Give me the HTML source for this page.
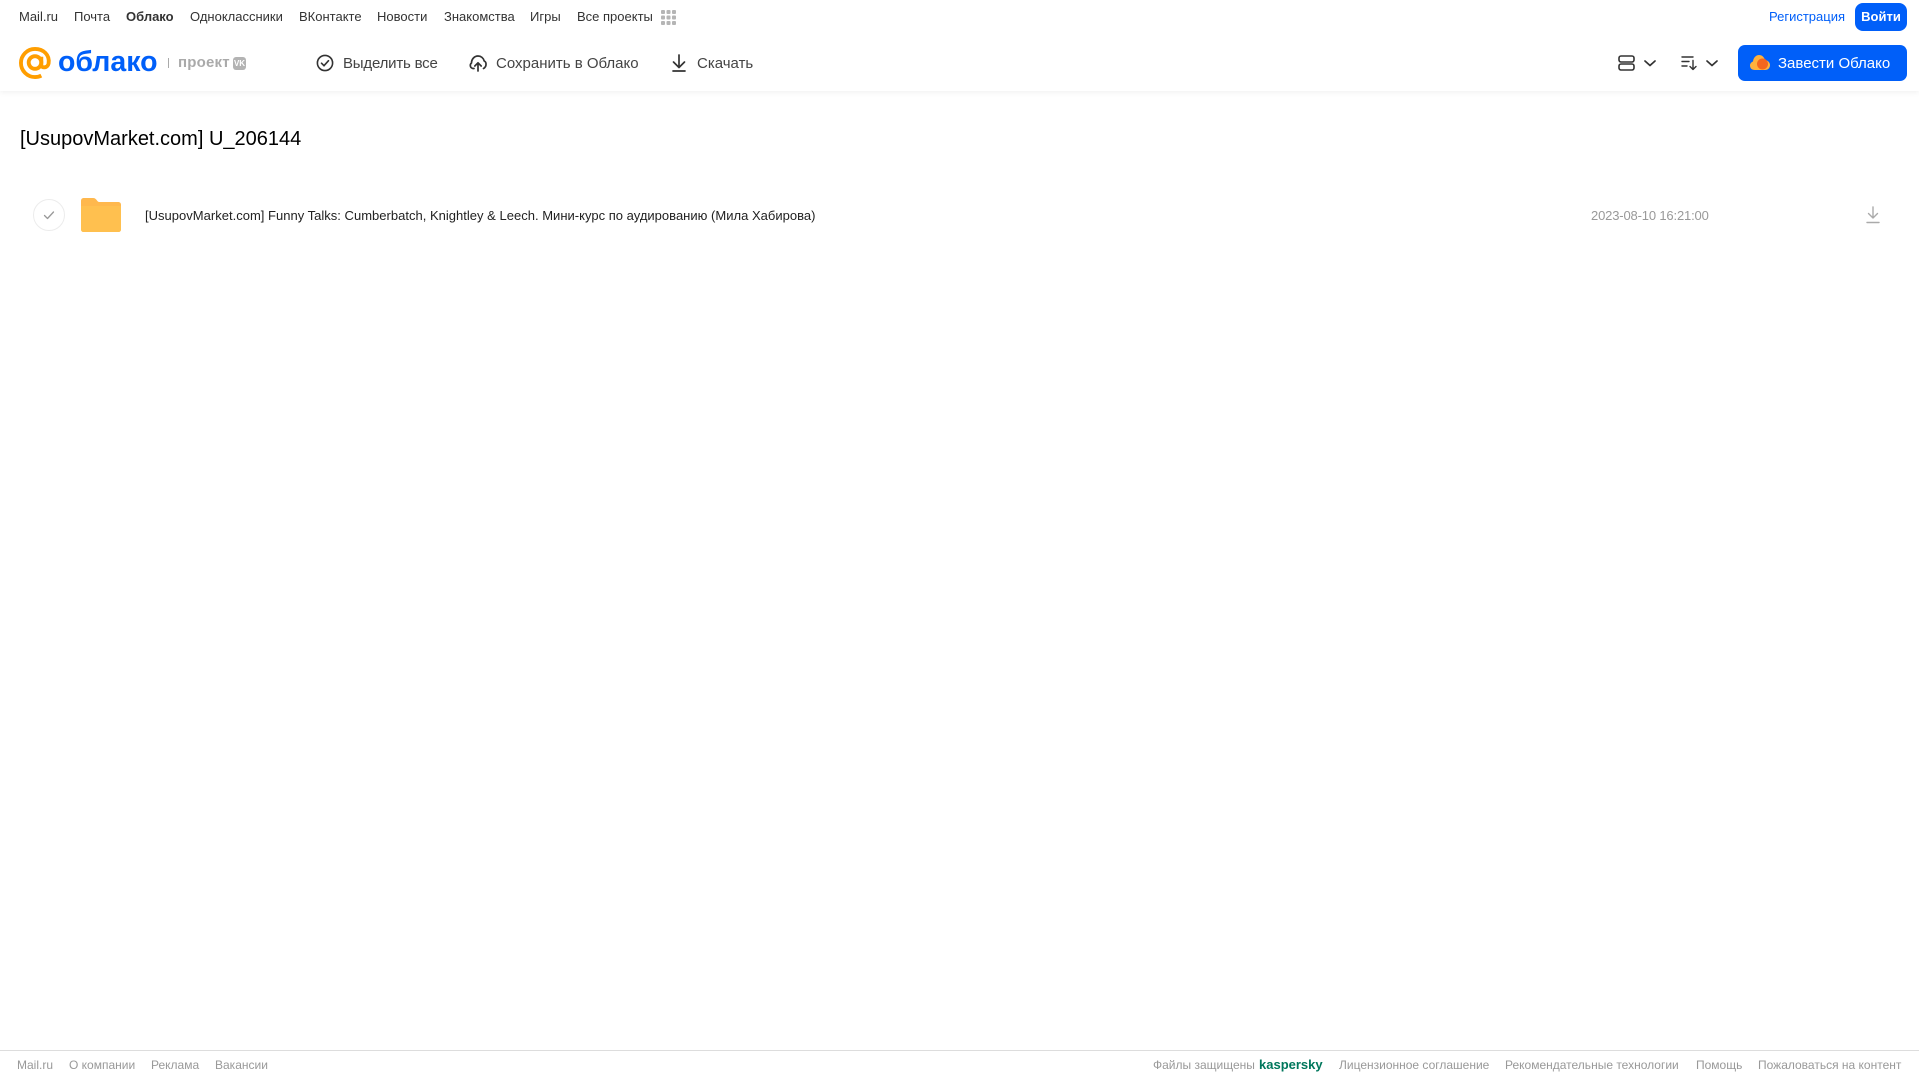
<!DOCTYPE html>
<html lang="ru"><head><meta charset="utf-8"><title>Облако</title>
<style>
*{margin:0;padding:0;box-sizing:border-box}
html,body{width:1919px;height:1079px;overflow:hidden;background:#fff;font-family:"Liberation Sans",sans-serif}
.t{position:absolute;white-space:nowrap;line-height:18px}
.n{font-size:13px;color:#333;top:8px}
.b{font-size:15px;color:#444;top:54.500px}
.f{font-size:12px;color:#999;top:1056px}
svg{position:absolute;overflow:visible}
#hd{position:absolute;left:0;top:0;width:1919px;height:91px;background:#fff;box-shadow:0 1px 6px rgba(0,0,0,.07)}
</style></head><body>
<div id="hd"></div>
<span class="t n" style="left:19px">Mail.ru</span>
<span class="t n" style="left:74px">Почта</span>
<span class="t n" style="left:126px;font-weight:bold">Облако</span>
<span class="t n" style="left:190px">Одноклассники</span>
<span class="t n" style="left:299px">ВКонтакте</span>
<span class="t n" style="left:377px">Новости</span>
<span class="t n" style="left:444px">Знакомства</span>
<span class="t n" style="left:530px">Игры</span>
<span class="t n" style="left:577px">Все проекты</span>
<svg style="left:661px;top:10px" width="15" height="15" fill="#b5b5b5"><rect width="4" height="4" rx="1"/><rect x="5.500" width="4" height="4" rx="1"/><rect x="11" width="4" height="4" rx="1"/><rect y="5.500" width="4" height="4" rx="1"/><rect x="5.500" y="5.500" width="4" height="4" rx="1"/><rect x="11" y="5.500" width="4" height="4" rx="1"/><rect y="11" width="4" height="4" rx="1"/><rect x="5.500" y="11" width="4" height="4" rx="1"/><rect x="11" y="11" width="4" height="4" rx="1"/></svg>
<span class="t n" style="left:1769px;color:#005ff9">Регистрация</span>
<div style="position:absolute;left:1855px;top:3px;width:52px;height:28px;background:#005ff9;border-radius:8px;color:#fff;font-size:13px;font-weight:bold;text-align:center;line-height:27px">Войти</div>

<svg style="left:19px;top:47px" width="32" height="32" viewBox="0 0 33 33" fill="none" stroke="#ff9e00" stroke-width="4"><circle cx="16.500" cy="16" r="6.500"/><path d="M23 10v8.500c0 3.500 6.500 3.500 7.500-1.500C32 8 25 2 16.500 2 8.500 2 2 8.500 2 16.500S8.500 31 16.500 31c2.500 0 4.500-.5 6.500-1.500"/></svg>
<span class="t" style="left:58px;top:44px;font-size:28.500px;line-height:36px;color:#005ff9;font-weight:bold">облако</span>
<div style="position:absolute;left:168px;top:58px;width:1px;height:10px;background:#aaa"></div>
<span class="t" style="left:178px;top:54px;font-size:15px;color:#aaa;font-weight:bold;letter-spacing:.2px">проект</span>
<div style="position:absolute;left:233px;top:57px;width:13px;height:13px;background:#b3b3b3;border-radius:3px;color:#fff;font-size:8px;font-weight:bold;line-height:13px;text-align:center">VK</div>

<svg style="left:316px;top:54px" width="18" height="18" fill="none" stroke="#333" stroke-width="1.600"><circle cx="9" cy="9" r="7.600"/><path d="M5.500 9.200l2.500 2.500 4.500-5" stroke-linecap="round"/></svg>
<span class="t b" style="left:343px;letter-spacing:-.2px">Выделить все</span>
<svg style="left:469px;top:54px" width="18" height="18" fill="none" stroke="#333" stroke-width="1.700" stroke-linecap="round" stroke-linejoin="round"><path d="M5 14.500H4C1 14 .5 10.500 2.500 9c0-4 3-7 6.500-7 3 0 5.500 2 6.200 5 2.300.8 2.800 5.500-.7 7.500"/><path d="M9 17V9M5.800 12L9 8.800l3.200 3.200"/></svg>
<span class="t b" style="left:496px">Сохранить в Облако</span>
<svg style="left:671px;top:54px" width="16" height="18" fill="none" stroke="#333" stroke-width="1.700" stroke-linecap="round" stroke-linejoin="round"><path d="M8 1v12M2.500 8L8 13.500 13.500 8M2 17h12"/></svg>
<span class="t b" style="left:697px">Скачать</span>

<svg style="left:1618px;top:55px" width="17" height="16" fill="none" stroke="#333" stroke-width="1.600"><rect x="1" y="1" width="15" height="6" rx="2"/><rect x="1" y="9" width="15" height="6" rx="2"/></svg>
<svg style="left:1644px;top:60px" width="12" height="7" fill="none" stroke="#333" stroke-width="1.700" stroke-linecap="round" stroke-linejoin="round"><path d="M1 1l5 4.500L11 1"/></svg>
<svg style="left:1681px;top:56px" width="16" height="14" fill="none" stroke="#333" stroke-width="1.400" stroke-linecap="round" stroke-linejoin="round"><path d="M1 1h11M1 5.500h7M1 10h5M12 4.500V13M9 10.500l3 3 3-3"/></svg>
<svg style="left:1706px;top:60px" width="12" height="7" fill="none" stroke="#333" stroke-width="1.700" stroke-linecap="round" stroke-linejoin="round"><path d="M1 1l5 4.500L11 1"/></svg>
<div style="position:absolute;left:1738px;top:45px;width:169px;height:36px;background:#005ff9;border-radius:7px"></div>
<svg style="left:1750px;top:54px" width="20" height="17"><path d="M5 16C1.500 16 0 14 0 11.500 0 9.500 1.500 8 3 7.500 3.500 3 6.500 1 9 1c3 0 5 2 6 5 3 .5 5 2.500 5 5 0 3-2 5-5 5z" fill="#ffb13d"/><circle cx="12.500" cy="10" r="5.500" fill="#f4661f"/></svg>
<span class="t" style="left:1778px;top:54.500px;font-size:15px;color:#fff">Завести Облако</span>

<h1 class="t" style="left:20px;top:124.500px;font-size:20px;line-height:28px;font-weight:normal;color:#000">[UsupovMarket.com] U_206144</h1>

<svg style="left:33px;top:199px" width="32" height="32" fill="none"><circle cx="16" cy="16" r="15.500" stroke="#ececec"/><path d="M11.500 16.500l3 3 6-6.500" stroke="#999" stroke-width="1.300" stroke-linecap="round" stroke-linejoin="round"/></svg>
<svg style="left:81px;top:198px" width="40" height="34"><path d="M3 0h9c2 0 3 1 4 2.500S18 4 19 4h18c2 0 3 1 3 3v24c0 2-1 3-3 3H3c-2 0-3-1-3-3V3C0 1 1 0 3 0z" fill="#ffb84d"/><path d="M0 8h40v23c0 2-1 3-3 3H3c-2 0-3-1-3-3z" fill="#ffc04f"/></svg>
<span class="t" style="left:145px;top:206.500px;font-size:13px;color:#222;letter-spacing:.012px">[UsupovMarket.com] Funny Talks: Cumberbatch, Knightley &amp; Leech. Мини-курс по аудированию (Мила Хабирова)</span>
<span class="t" style="left:1591px;top:206.500px;font-size:13px;color:#999;letter-spacing:-.16px">2023-08-10 16:21:00</span>
<svg style="left:1866px;top:206px" width="14" height="18" fill="none" stroke="#aaa" stroke-width="1.400" stroke-linecap="round" stroke-linejoin="round"><path d="M7 1v11M2.500 7.500L7 12l4.500-4.500M1 16.500h12"/></svg>

<div style="position:absolute;left:0;top:1050px;width:1919px;height:1px;background:#ddd"></div>
<span class="t f" style="left:17px">Mail.ru</span>
<span class="t f" style="left:69px">О компании</span>
<span class="t f" style="left:151px">Реклама</span>
<span class="t f" style="left:215px">Вакансии</span>
<span class="t f" style="left:1153px">Файлы защищены</span>
<span class="t f" style="left:1259px;color:#00775c;font-size:13px;font-weight:bold">kaspersky</span>
<span class="t f" style="left:1339px">Лицензионное соглашение</span>
<span class="t f" style="left:1505px">Рекомендательные технологии</span>
<span class="t f" style="left:1696px">Помощь</span>
<span class="t f" style="left:1758px">Пожаловаться на контент</span>
</body></html>
